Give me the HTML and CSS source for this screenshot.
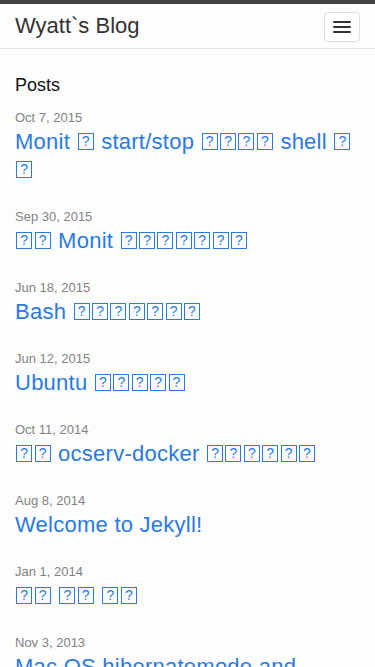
FILE: index.html
```html
<!DOCTYPE html>
<html lang="zh">
<head>
  <meta charset="UTF-8" />
  <meta name="viewport" content="width=device-width, initial-scale=1.0" />
  <title>Wyatt`s Blog</title>
  <link rel="stylesheet" href="styles.css">
</head>
<body>
  <header class="site-header">
    <a class="site-title" href="#">Wyatt`s Blog</a>
    <button class="menu-toggle" aria-label="Menu">
      <span class="bar"></span>
      <span class="bar"></span>
      <span class="bar"></span>
    </button>
  </header>

  <main class="page">
    <h1 class="page-heading">Posts</h1>
    <ul class="post-list">
      <li>
        <span class="post-meta">Oct 7, 2015</span>
        <a class="post-link" href="#">Monit <span class="tofu">?</span> start/stop <span class="tofu">?</span><wbr><span class="tofu">?</span><wbr><span class="tofu">?</span><wbr><span class="tofu">?</span> shell <span class="tofu">?</span><wbr><span class="tofu">?</span></a>
      </li>
      <li>
        <span class="post-meta">Sep 30, 2015</span>
        <a class="post-link" href="#"><span class="tofu">?</span><wbr><span class="tofu">?</span> Monit <span class="tofu">?</span><wbr><span class="tofu">?</span><wbr><span class="tofu">?</span><wbr><span class="tofu">?</span><wbr><span class="tofu">?</span><wbr><span class="tofu">?</span><wbr><span class="tofu">?</span></a>
      </li>
      <li>
        <span class="post-meta">Jun 18, 2015</span>
        <a class="post-link" href="#">Bash <span class="tofu">?</span><wbr><span class="tofu">?</span><wbr><span class="tofu">?</span><wbr><span class="tofu">?</span><wbr><span class="tofu">?</span><wbr><span class="tofu">?</span><wbr><span class="tofu">?</span></a>
      </li>
      <li>
        <span class="post-meta">Jun 12, 2015</span>
        <a class="post-link" href="#">Ubuntu <span class="tofu">?</span><wbr><span class="tofu">?</span><wbr><span class="tofu">?</span><wbr><span class="tofu">?</span><wbr><span class="tofu">?</span></a>
      </li>
      <li>
        <span class="post-meta">Oct 11, 2014</span>
        <a class="post-link" href="#"><span class="tofu">?</span><wbr><span class="tofu">?</span> ocserv-docker <span class="tofu">?</span><wbr><span class="tofu">?</span><wbr><span class="tofu">?</span><wbr><span class="tofu">?</span><wbr><span class="tofu">?</span><wbr><span class="tofu">?</span></a>
      </li>
      <li>
        <span class="post-meta">Aug 8, 2014</span>
        <a class="post-link" href="#">Welcome to Jekyll!</a>
      </li>
      <li>
        <span class="post-meta">Jan 1, 2014</span>
        <a class="post-link" href="#"><span class="tofu">?</span><wbr><span class="tofu">?</span> <span class="tofu">?</span><wbr><span class="tofu">?</span> <span class="tofu">?</span><wbr><span class="tofu">?</span></a>
      </li>
      <li>
        <span class="post-meta">Nov 3, 2013</span>
        <a class="post-link" href="#">Mac OS hibernatemode and sleepimage</a>
      </li>
    </ul>
  </main>
</body>
</html>
```

FILE: styles.css
```css
body {
  margin: 0;
  padding: 0;
  background-color: #fdfdfd;
  color: #111;
  font-family: 'Liberation Sans', Arial, sans-serif;
}
a {
  text-decoration: none;
}
.site-header {
  display: flex;
  align-items: center;
  justify-content: space-between;
  height: 44px;
  padding: 0 15px;
  border-top: 4px solid #424242;
  border-bottom: 1px solid #e8e8e8;
}
.site-title {
  font-size: 22px;
  line-height: 44px;
  color: #333;
}
.menu-toggle {
  display: flex;
  flex-direction: column;
  align-items: center;
  justify-content: center;
  gap: 3px;
  width: 36px;
  height: 30px;
  padding: 0;
  margin-top: 1px;
  background-color: #fff;
  border: 1px solid #dcdcdc;
  border-radius: 4px;
}
.menu-toggle .bar {
  display: block;
  width: 18px;
  height: 2px;
  background-color: #333;
  border-radius: 1px;
}
.page {
  padding: 0 15px;
}
.page-heading {
  margin: 24px 0 11px;
  font-size: 18px;
  line-height: 24px;
  font-weight: normal;
  color: #111;
}
.post-list {
  list-style: none;
  margin: 0;
  padding: 0;
}
.post-list li {
  margin-bottom: 23px;
}
.post-meta {
  display: block;
  font-size: 13px;
  line-height: 20px;
  color: #828282;
}
.post-link {
  display: block;
  font-size: 22px;
  line-height: 28px;
  letter-spacing: 0.25px;
  color: #2a7ae2;
}
.tofu {
  display: inline-block;
  box-sizing: border-box;
  width: 16px;
  height: 17px;
  margin: 0 1.2px;
  border: 1.5px solid #2a7ae2;
  overflow: hidden;
  vertical-align: -1px;
  font-size: 14px;
  line-height: 14px;
  text-align: center;
  letter-spacing: 0;
}
```
